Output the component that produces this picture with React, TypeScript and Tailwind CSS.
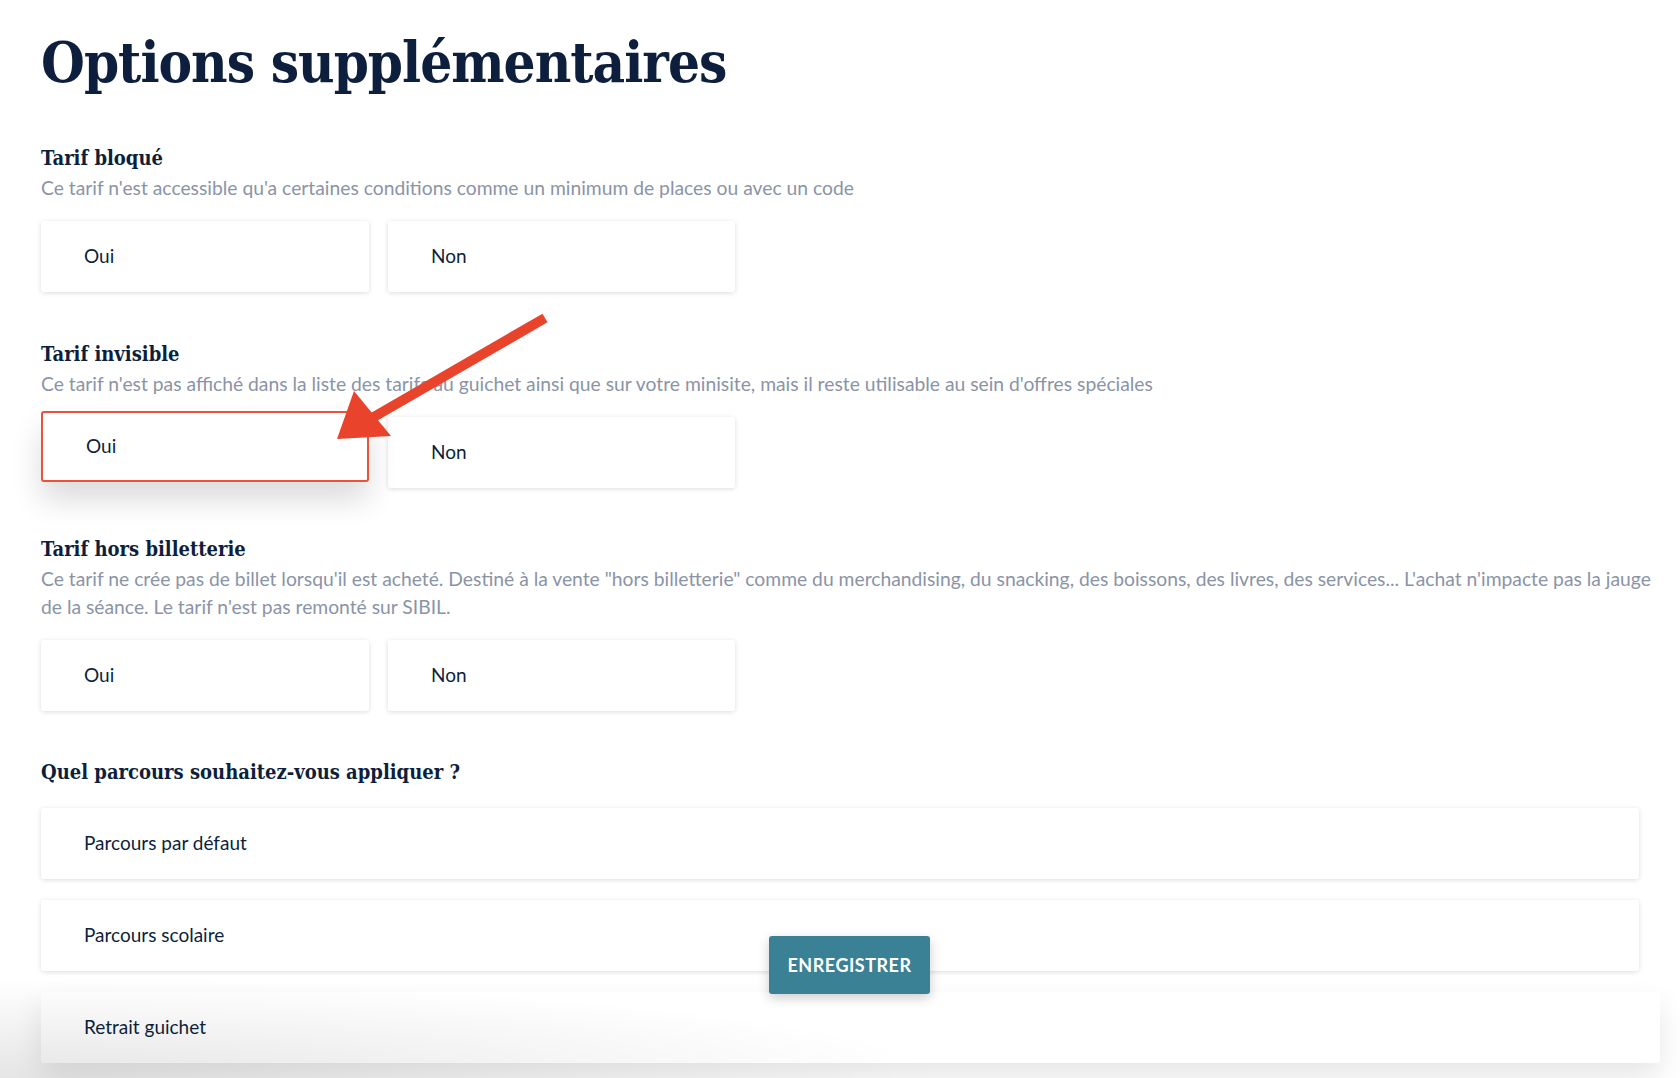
import React from 'react';

const serif = "font-['DejaVu_Serif_Condensed','DejaVu_Serif',serif] font-stretch-condensed";
const sans = "font-['Lato','Noto_Sans',sans-serif]";

interface ChoiceProps {
  label: string;
  selected?: boolean;
  className?: string;
}

const Choice: React.FC<ChoiceProps> = ({ label, selected, className = '' }) => (
  <div
    className={`flex h-[71px] items-center rounded-[3px] bg-white pl-[43px] text-[19px] text-[#0d1f3c] ${
      selected
        ? 'border-2 border-[#e8533a] shadow-[0_18px_30px_rgba(0,0,0,0.14)]'
        : 'shadow-[0_1px_5px_rgba(0,0,0,0.14)]'
    } ${className}`}
  >
    {label}
  </div>
);

interface SectionProps {
  title: string;
  description: React.ReactNode;
  children: React.ReactNode;
  className?: string;
}

const Section: React.FC<SectionProps> = ({ title, description, children, className = '' }) => (
  <section className={className}>
    <h2 className={`${serif} text-[20px] font-bold leading-[28px] text-[#0d1f3c]`}>{title}</h2>
    <p className="mt-[2px] max-w-[1625px] text-[19.3px] leading-[28px] text-[#8a94a6]">{description}</p>
    <div className="mt-[19px] flex items-start gap-[19px]">{children}</div>
  </section>
);

export default function App() {
  return (
    <div className={`${sans} relative min-h-screen overflow-hidden bg-white pl-[41px] pr-[15px] pt-[22px]`}>
      <h1 className={`${serif} text-[56px] font-bold leading-[80px] tracking-[-1px] text-[#0d1f3c]`}>
        Options supplémentaires
      </h1>

      <Section
        className="mt-[42px]"
        title="Tarif bloqué"
        description="Ce tarif n'est accessible qu'a certaines conditions comme un minimum de places ou avec un code"
      >
        <Choice label="Oui" className="w-[328px]" />
        <Choice label="Non" className="w-[347px]" />
      </Section>

      <Section
        className="mt-[48px]"
        title="Tarif invisible"
        description="Ce tarif n'est pas affiché dans la liste des tarifs au guichet ainsi que sur votre minisite, mais il reste utilisable au sein d'offres spéciales"
      >
        <Choice label="Oui" selected className="w-[328px] -translate-y-[6px]" />
        <Choice label="Non" className="w-[347px]" />
      </Section>

      <Section
        className="mt-[47px]"
        title="Tarif hors billetterie"
        description={
          'Ce tarif ne crée pas de billet lorsqu\'il est acheté. Destiné à la vente "hors billetterie" comme du merchandising, du snacking, des boissons, des livres, des services... L\'achat n\'impacte pas la jauge de la séance. Le tarif n\'est pas remonté sur SIBIL.'
        }
      >
        <Choice label="Oui" className="w-[328px]" />
        <Choice label="Non" className="w-[347px]" />
      </Section>

      <section className="mt-[47px]">
        <h2 className={`${serif} text-[20px] font-bold leading-[28px] text-[#0d1f3c]`}>
          Quel parcours souhaitez-vous appliquer ?
        </h2>
        <div className="mt-[22px] flex flex-col gap-[21px]">
          <Choice label="Parcours par défaut" className="w-[1598px]" />
          <Choice label="Parcours scolaire" className="w-[1598px]" />
          <Choice label="Retrait guichet" className="w-[1619px] shadow-[0_14px_30px_rgba(0,0,0,0.10)]" />
        </div>
      </section>

      <div className="pointer-events-none absolute bottom-0 left-0 h-[100px] w-[960px] bg-[radial-gradient(ellipse_at_bottom_left,rgba(0,0,0,0.10),transparent_70%)]" />

      <button className="absolute left-[769px] top-[936px] h-[58px] w-[161px] rounded-[3px] bg-[#3b8196] text-[18px] font-bold tracking-[0.5px] text-white shadow-[0_4px_12px_rgba(0,0,0,0.2)]">
        ENREGISTRER
      </button>

      <svg
        className="pointer-events-none absolute left-0 top-0"
        width="1680"
        height="1078"
        viewBox="0 0 1680 1078"
      >
        <line x1="545" y1="318" x2="372" y2="418" stroke="#e9442b" strokeWidth="10" />
        <polygon points="337,439 354,391 391,436" fill="#e9442b" />
      </svg>
    </div>
  );
}
